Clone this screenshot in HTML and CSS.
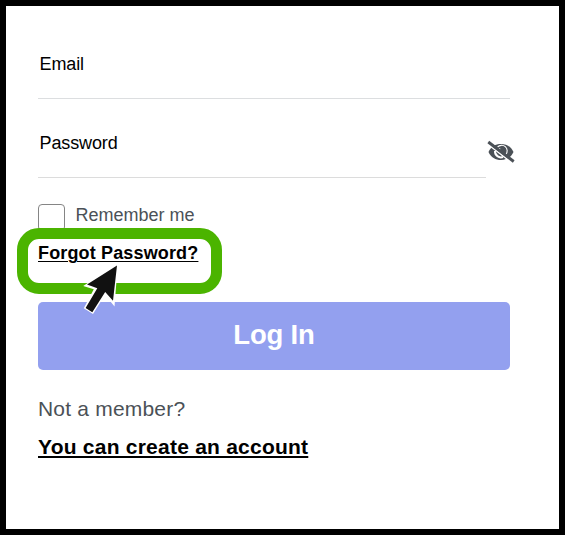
FILE: index.html
```html
<!DOCTYPE html>
<html lang="en">
<head>
<meta charset="utf-8">
<title>Log In</title>
<link rel="stylesheet" href="styles.css">
</head>
<body>
<form class="login">
  <div class="field"><span class="label">Email</span></div>
  <div class="password-row">
    <div class="field field-password"><span class="label">Password</span></div>
    <svg class="eye" width="28" height="24" viewBox="0 0 28 24">
      <path d="M1.500 12C4 6.500 8.500 4 14 4S24 6.500 26.500 12C24 17.500 19.500 20 14 20S4 17.500 1.500 12Z" fill="#4b5157"/>
      <path d="M10.500 7.200A5.500 5.500 0 0 1 18.800 14.500" fill="none" stroke="#fff" stroke-width="1.100"/>
      <path d="M8 11A6 6 0 0 0 16 17" fill="none" stroke="#fff" stroke-width="2"/>
      <circle cx="12.300" cy="9" r="1.100" fill="#fff"/>
      <path d="M0 3.600L25.500 23.100" stroke="#fff" stroke-width="1.500"/>
      <path d="M1.300 2L26.700 21.500" stroke="#4b5157" stroke-width="2.900"/>
    </svg>
  </div>
  <label class="remember"><span class="checkbox"></span><span class="remember-text">Remember me</span></label>
  <div class="forgot"><a class="forgot-link">Forgot Password?</a>
    <span class="ring"></span>
    <svg class="pointer" width="50" height="60" viewBox="75 260 50 60">
      <path d="M117.800 263.600L83.200 286L93.800 289.200L83.800 308.300L93 314L105 294.800L114.500 306.500Z" fill="#fff"/>
      <path d="M117 265.500L87 284.400L97.300 288.300L85.600 308L92.300 312.300L105.200 292L113 300.800Z" fill="#111"/>
    </svg>
  </div>
  <button class="submit" type="button">Log In</button>
  <p class="question">Not a member?</p>
  <a class="create">You can create an account</a>
</form>
</body>
</html>
```
FILE: styles.css
```css
* { box-sizing: border-box; }
body { margin: 0; background: #fff; font-family: "Liberation Sans", Arial, sans-serif; }
.login { display: flex; flex-direction: column; align-items: flex-start; height: 535px; border: 6px solid #000; padding: 34px 49px 0 32px; }
.field { width: 472px; height: 59px; padding: 14px 0 0 1.5px; border-bottom: 1px solid #dcdee0; }
.label { display: block; font-size: 18px; line-height: 21px; letter-spacing: -.12px; color: #000; }
.password-row { display: flex; width: 490px; height: 79px; padding-top: 20px; }
.field-password { width: 448px; border-color: #dcdcdc; }
.eye { flex: none; margin: 21px 0 0 1px; }
.remember { display: flex; height: 52px; padding-top: 26px; }
.checkbox { width: 27px; height: 27px; border: 1px solid #858585; border-radius: 4px; }
.remember-text { margin: 1px 0 0 10.5px; font-size: 18px; line-height: 21px; color: #4b5157; }
.forgot { position: relative; height: 72px; padding-top: 13px; }
.forgot-link { display: block; font-size: 18px; line-height: 21px; font-weight: bold; letter-spacing: .15px; color: #000; text-decoration: underline; text-decoration-thickness: 1px; text-underline-offset: 2px; }
.ring { position: absolute; left: -21px; top: -2px; width: 205px; height: 66px; border: 11px solid #4bb400; border-radius: 22px; }
.pointer { position: absolute; left: 37px; top: 30px; z-index: 1; }
.submit { width: 472px; height: 68px; padding: 0 0 3px; border: 0; border-radius: 5px; background: #93a0ef; color: #fff; font: bold 27.5px "Liberation Sans", Arial, sans-serif; letter-spacing: -.2px; }
.question { margin: 27px 0 0; font-size: 21px; line-height: 24px; letter-spacing: .2px; color: #4b5157; }
.create { margin-top: 14px; font-size: 21px; line-height: 24px; font-weight: bold; letter-spacing: .23px; color: #000; text-decoration: underline; text-decoration-thickness: 2px; text-underline-offset: 2px; }
```
